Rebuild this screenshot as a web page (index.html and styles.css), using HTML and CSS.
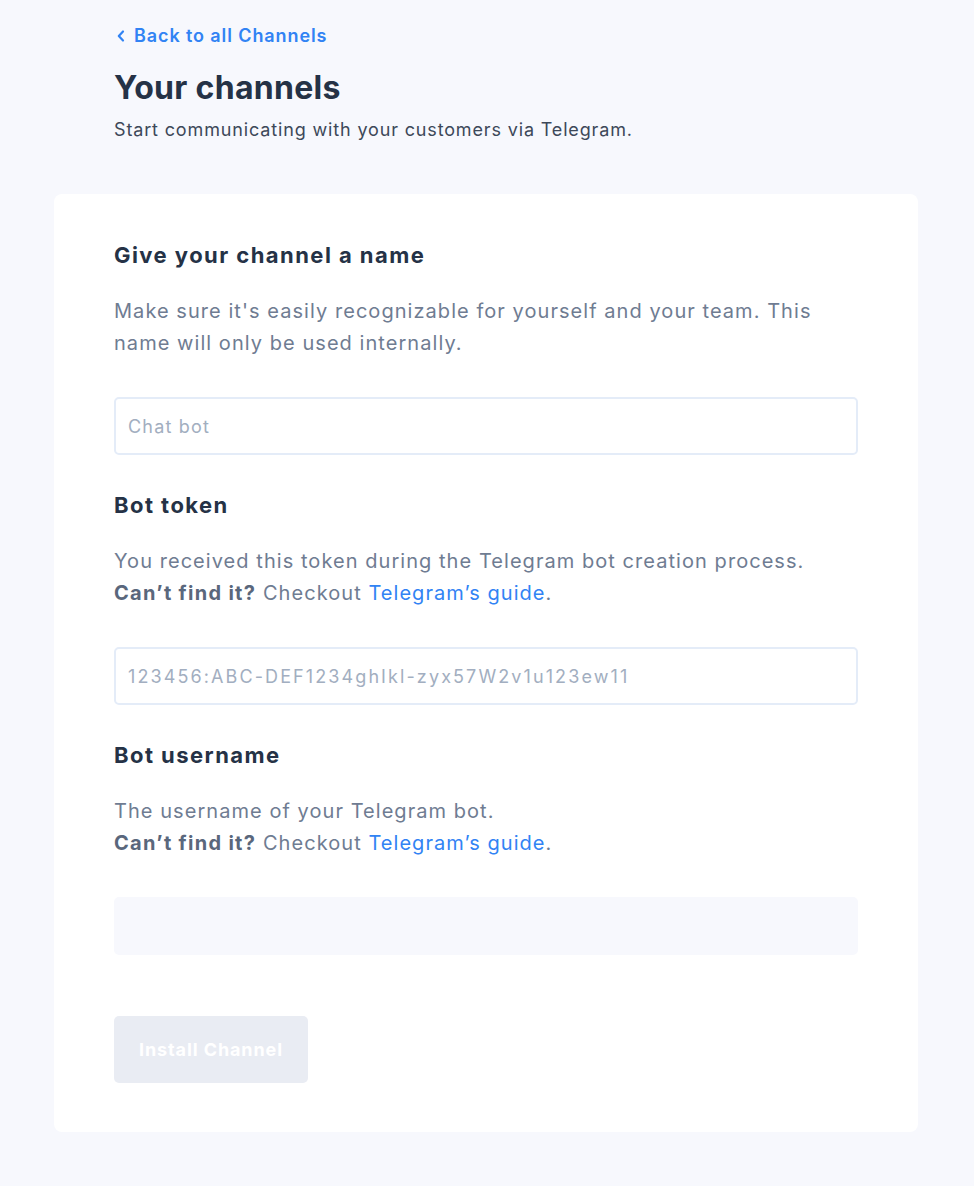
FILE: index.html
```html
<!DOCTYPE html>
<html lang="en">
<head>
<meta charset="utf-8">
<title>Your channels</title>
<link rel="stylesheet" href="styles.css">
</head>
<body>
<div class="page">
  <header class="page-head">
    <a class="back" href="#">
      <svg class="back-icon" width="10" height="14" viewBox="0 0 10 14" aria-hidden="true"><path d="M7 2.5 L2.8 7 L7 11.5" fill="none" stroke="currentColor" stroke-width="2.2" stroke-linecap="round" stroke-linejoin="round"/></svg>
      <span>Back to all Channels</span>
    </a>
    <h1 class="title">Your channels</h1>
    <p class="subtitle">Start communicating with your customers via Telegram.</p>
  </header>

  <main class="card">
    <section class="field">
      <h2 class="field-title">Give your channel a name</h2>
      <p class="field-desc">Make sure it's easily recognizable for yourself and your team. This name will only be used internally.</p>
      <input class="input" type="text" placeholder="Chat bot">
    </section>
    <section class="field">
      <h2 class="field-title">Bot token</h2>
      <p class="field-desc">You received this token during the Telegram bot creation process.<br><strong>Can’t find it?</strong> Checkout <a href="#" class="link">Telegram’s guide</a>.</p>
      <input class="input input-token" type="text" placeholder="123456:ABC-DEF1234ghIkl-zyx57W2v1u123ew11">
    </section>
    <section class="field">
      <h2 class="field-title">Bot username</h2>
      <p class="field-desc">The username of your Telegram bot.<br><strong>Can’t find it?</strong> Checkout <a href="#" class="link">Telegram’s guide</a>.</p>
      <input class="input input-disabled" type="text" disabled>
    </section>
    <button class="btn" type="button" disabled>Install Channel</button>
  </main>
</div>
</body>
</html>
```

FILE: styles.css
```css
* { box-sizing: border-box; }
html, body { margin: 0; padding: 0; }
body {
  background: #f7f8fd;
  font-family: Inter, "Noto Sans", "Liberation Sans", sans-serif;
  color: #253246;
  -webkit-font-smoothing: antialiased;
}
.page {
  width: 864px;
  margin: 0 0 0 54px;
  padding: 23px 0 54px;
}
.page-head {
  padding-left: 60px;
  margin-bottom: 52px;
}
.back {
  display: inline-flex;
  align-items: center;
  gap: 8px;
  color: #3183f4;
  text-decoration: none;
  font-size: 18px;
  font-weight: 600;
  line-height: 26px;
  letter-spacing: 0.9px;
}
.back-icon { margin-left: 2px; }
.title {
  margin: 19px 0 0;
  font-size: 32px;
  font-weight: 700;
  line-height: 40px;
  color: #253246;
  letter-spacing: 0.3px;
}
.subtitle {
  margin: 10px 0 0;
  font-size: 18px;
  line-height: 24px;
  color: #3d4859;
  letter-spacing: 0.85px;
}
.card {
  background: #fff;
  border-radius: 8px;
  padding: 45px 60px 49px;
  display: flex;
  flex-direction: column;
  align-items: flex-start;
}
.field { width: 100%; }
.field + .field { margin-top: 34px; }
.field-title {
  margin: 0;
  font-size: 22px;
  font-weight: 700;
  line-height: 32px;
  color: #253246;
  letter-spacing: 1.45px;
}
.field-desc {
  margin: 24px 0 0;
  font-size: 20px;
  line-height: 32px;
  color: #6f7c92;
  max-width: 720px;
  letter-spacing: 1.05px;
}
.field-desc strong { color: #5a677c; font-weight: 700; letter-spacing: 1.3px; }
.link { color: #3183f4; text-decoration: none; }
.input {
  display: block;
  width: 100%;
  height: 58px;
  margin-top: 38px;
  border: 2px solid #e4ecf8;
  border-radius: 5px;
  background: #fff;
  padding: 0 12px;
  font-family: inherit;
  font-size: 18px;
  color: #253246;
  outline: none;
  letter-spacing: 1.2px;
}
.input-token { letter-spacing: 2.1px; }
.input::placeholder { color: #a2aec0; }
.input-disabled {
  background: #f7f8fd;
  border-color: #f7f8fd;
}
.btn {
  margin-top: 61px;
  width: 194px;
  height: 67px;
  border: 0;
  border-radius: 5px;
  background: #e9ecf3;
  color: #fff;
  font-family: inherit;
  font-size: 18px;
  font-weight: 700;
  letter-spacing: 0.9px;
}
```
